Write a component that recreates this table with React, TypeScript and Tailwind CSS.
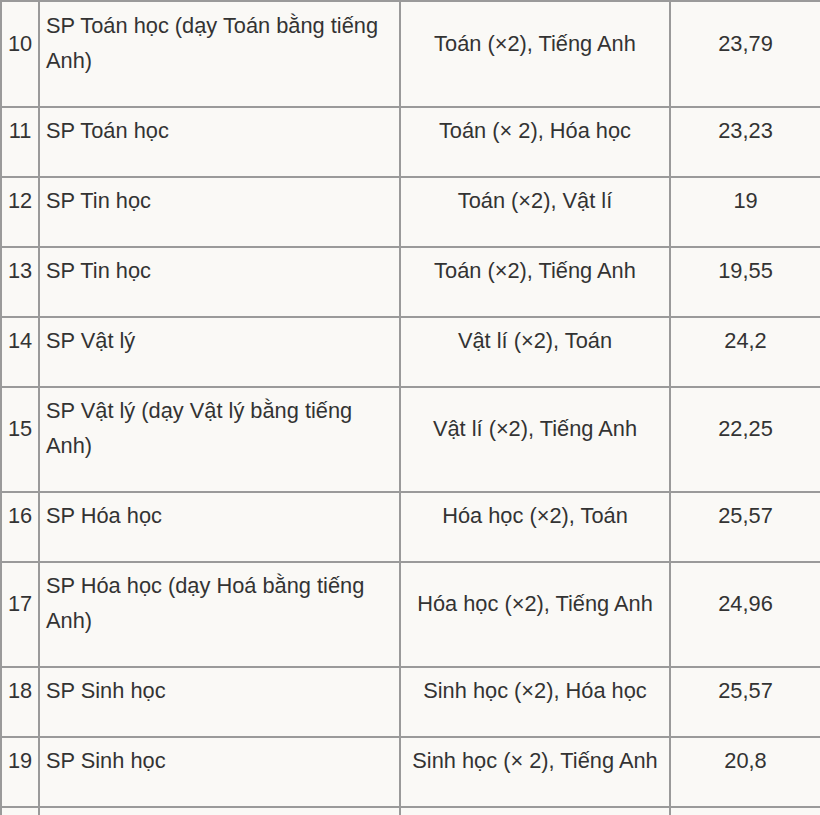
const rows = [
  ["10", "SP Toán học (dạy Toán bằng tiếng Anh)", "Toán (×2), Tiếng Anh", "23,79"],
  ["11", "SP Toán học", "Toán (× 2), Hóa học", "23,23"],
  ["12", "SP Tin học", "Toán (×2), Vật lí", "19"],
  ["13", "SP Tin học", "Toán (×2), Tiếng Anh", "19,55"],
  ["14", "SP Vật lý", "Vật lí (×2), Toán", "24,2"],
  ["15", "SP Vật lý (dạy Vật lý bằng tiếng Anh)", "Vật lí (×2), Tiếng Anh", "22,25"],
  ["16", "SP Hóa học", "Hóa học (×2), Toán", "25,57"],
  ["17", "SP Hóa học (dạy Hoá bằng tiếng Anh)", "Hóa học (×2), Tiếng Anh", "24,96"],
  ["18", "SP Sinh học", "Sinh học (×2), Hóa học", "25,57"],
  ["19", "SP Sinh học", "Sinh học (× 2), Tiếng Anh", "20,8"],
  ["20", "", "", ""],
]

const cell = "border-r-2 border-b-2 border-[#9a9a9a] pb-[28px] px-[6px] align-middle"

export default function App() {
  return (
    <div className="h-[815px] w-[820px] overflow-hidden bg-[#faf9f6]">
      <table
        className="table-fixed w-[822px] border-separate border-spacing-0 border-l-2 border-t-2 border-[#9a9a9a] text-[21.8px] leading-[35px] text-[#333]"
        style={{ fontFamily: '"Liberation Sans", Arial, sans-serif' }}
      >
        <colgroup>
          <col className="w-[38px]" />
          <col className="w-[361px]" />
          <col className="w-[270px]" />
          <col className="w-[151px]" />
        </colgroup>
        <tbody>
          {rows.map((r, i) => {
            const pt = i === 0 ? "pt-[6px]" : "pt-[5px]"
            return (
              <tr key={r[0]}>
                <td className={`${cell} ${pt} text-center px-0`}>{r[1] ? r[0] : ""}</td>
                <td className={`${cell} ${pt} text-left`}>{r[1]}</td>
                <td className={`${cell} ${pt} text-center`}>{r[2]}</td>
                <td className={`${cell} ${pt} text-center`}>{r[3]}</td>
              </tr>
            )
          })}
        </tbody>
      </table>
    </div>
  )
}
